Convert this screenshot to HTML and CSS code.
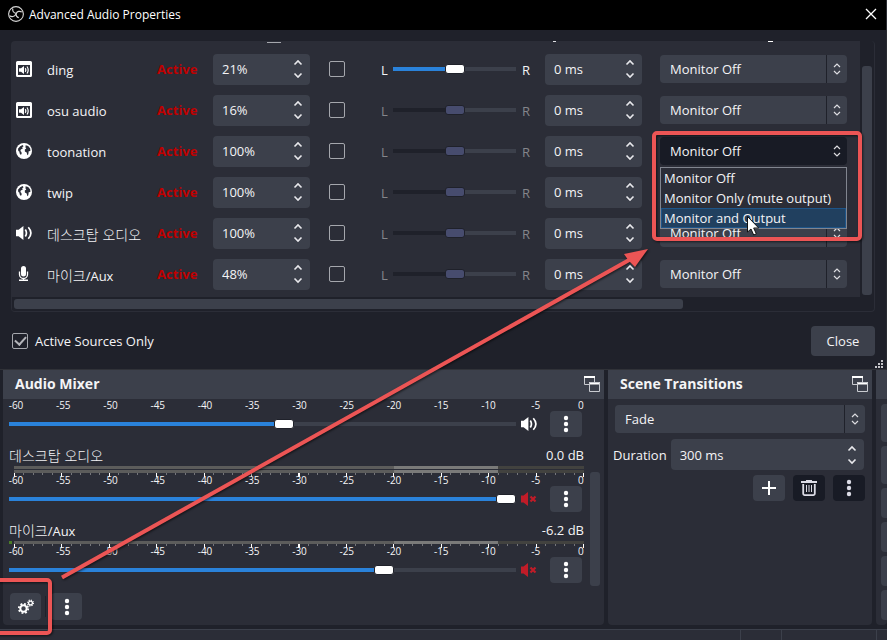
FILE: index.html
```html
<!DOCTYPE html>
<html lang="en">
<head>
<meta charset="utf-8">
<title>Advanced Audio Properties</title>
<link rel="stylesheet" href="styles.css">
</head>
<body>
<svg class="defs" aria-hidden="true">
  <symbol id="spin" viewBox="0 0 10 20"><path d="M1.500 5.500 5 2l3.500 3.500M1.500 14.500 5 18l3.500-3.500" fill="none" stroke="#e8e8ec" stroke-width="1.600"/></symbol>
  <symbol id="updown" viewBox="0 0 8 12"><path d="M1 4l3-3 3 3M1 8l3 3 3-3" fill="none" stroke="#dcdce0" stroke-width="1.200"/></symbol>
  <symbol id="app" viewBox="0 0 16 16"><path fill="#fff" fill-rule="evenodd" d="M1.500 0h13A1.500 1.500 0 0 1 16 1.500v13a1.500 1.500 0 0 1-1.500 1.500h-13A1.500 1.500 0 0 1 0 14.500v-13A1.500 1.500 0 0 1 1.500 0zM2 4v10h12V4z"/><path fill="#fff" d="M3 7.300h2L8 5v8L5 10.700H3z"/><path fill="none" stroke="#fff" stroke-width="1.200" d="M9.300 7.200q1.200 1.800 0 3.600M11 5.500q2.400 3.500 0 7"/></symbol>
  <symbol id="globe" viewBox="0 0 16 16"><circle cx="8" cy="8" r="8" fill="#fff"/><path fill="#2b2d37" d="M4.200 3.200 6.600 2l1 1.300-1.400 1 .6 1.200-2 1-.4 1.600 1 .8.300 1.700-.8 1.400-1.200-1.500-.4-2L2.300 8 2 5.800zM9.600 2.300l2.600.7 2 2.600.2 2.400-1.700.2-.4 3-1 1-.6-2.700-1.800-1-.1-1.900 1.500-1-.8-1z"/></symbol>
  <symbol id="speaker" viewBox="0 0 16 16"><path fill="#fff" d="M0 4.700h2.600L7.400 1v14l-4.800-3.700H0z"/><path fill="none" stroke="#fff" stroke-width="1.700" d="M9.300 4.600q2.300 3.400 0 6.800M12.300 2.300q5.200 5.700 0 11.400"/></symbol>
  <symbol id="muted" viewBox="0 0 16 16"><path fill="#c01c28" d="M0 4.500h2.500L7 1v14l-4.500-3.500H0z"/><path stroke="#c01c28" stroke-width="2.200" d="M9.500 5.500l5 5M14.500 5.500l-5 5"/></symbol>
  <symbol id="mic" viewBox="0 0 16 16"><rect x="5" y="0" width="5" height="10.500" rx="2.500" fill="#fff"/><path fill="none" stroke="#fff" stroke-width="1.300" d="M3.500 5.500v3a4 4 0 0 0 8 0v-3M7.500 12.500v2"/><path fill="#fff" d="M3 13.600h9V15H3z"/></symbol>
  <symbol id="dots" viewBox="0 0 6 18"><g fill="currentColor"><circle cx="3" cy="3" r="2.200"/><circle cx="3" cy="9" r="2.200"/><circle cx="3" cy="15" r="2.200"/></g></symbol>
  <symbol id="popout" viewBox="0 0 16 16"><path fill="none" stroke="#c9cbd0" d="M5 8.500H.5v-8h10V6"/><path fill="#fff" d="M0 0h11v2H0zM5 6h11v2.500H5z"/><path fill="none" stroke="#c9cbd0" d="M5.500 6.500h10v9h-10z"/></symbol>
</svg>

<div class="app">
<section class="dialog">
  <header class="titlebar">
    <svg width="16" height="16" viewBox="0 0 16 16" aria-hidden="true"><g fill="none" stroke="#d6d6d6"><circle cx="8" cy="8" r="7.400" stroke-width="1.100"/><path stroke-width="1.200" d="M4.800 2.500c-.6 2.400.8 4.600 3.600 4.800M13.800 6c-2-1.300-4.700-.6-5.400 1.300-.8 2 .4 4 2.400 4.300M1.500 9.800c2.300 1.300 5 .9 6-1 .4-.7.600-1.200.900-1.500"/></g></svg>
    <h1>Advanced Audio Properties</h1>
    <button class="x" aria-label="Close window"><svg width="12" height="12" viewBox="0 0 12 12"><path d="M1 1l10 10M11 1 1 11" stroke="#fff" stroke-width="1.300"/></svg></button>
  </header>

  <div class="frame">
    <div class="sources">
      <div class="heading" aria-hidden="true"><i class="h-box"></i><i class="h-sync"></i><i class="h-mon"></i></div>

      <div class="row">
        <svg class="ico"><use href="#app"/></svg><span class="name">ding</span><b class="active">Active</b>
        <div class="spin"><input type="text" value="21%" aria-label="ding volume"><svg><use href="#spin"/></svg></div>
        <input class="check" type="checkbox" aria-label="ding mono">
        <div class="balance"><span>L</span><input type="range" value="50" style="--v:50%" aria-label="ding balance"><span>R</span></div>
        <div class="spin"><input type="text" value="0 ms" aria-label="ding sync offset"><svg><use href="#spin"/></svg></div>
        <div class="select"><select aria-label="ding monitoring"><option>Monitor Off</option></select><svg><use href="#updown"/></svg></div>
      </div>

      <div class="row">
        <svg class="ico"><use href="#app"/></svg><span class="name">osu audio</span><b class="active">Active</b>
        <div class="spin"><input type="text" value="16%" aria-label="osu audio volume"><svg><use href="#spin"/></svg></div>
        <input class="check" type="checkbox" aria-label="osu audio mono">
        <div class="balance off"><span>L</span><input type="range" value="50" style="--v:50%" disabled aria-label="osu audio balance"><span>R</span></div>
        <div class="spin"><input type="text" value="0 ms" aria-label="osu audio sync offset"><svg><use href="#spin"/></svg></div>
        <div class="select"><select aria-label="osu audio monitoring"><option>Monitor Off</option></select><svg><use href="#updown"/></svg></div>
      </div>

      <div class="row">
        <svg class="ico"><use href="#globe"/></svg><span class="name">toonation</span><b class="active">Active</b>
        <div class="spin"><input type="text" value="100%" aria-label="toonation volume"><svg><use href="#spin"/></svg></div>
        <input class="check" type="checkbox" aria-label="toonation mono">
        <div class="balance off"><span>L</span><input type="range" value="50" style="--v:50%" disabled aria-label="toonation balance"><span>R</span></div>
        <div class="spin"><input type="text" value="0 ms" aria-label="toonation sync offset"><svg><use href="#spin"/></svg></div>
        <div class="select open"><select aria-label="toonation monitoring"><option>Monitor Off</option></select><svg><use href="#updown"/></svg>
          <ul class="menu" role="listbox" aria-label="Monitoring options">
            <li role="option">Monitor Off</li>
            <li role="option">Monitor Only (mute output)</li>
            <li role="option" class="hover">Monitor and Output</li>
          </ul>
        </div>
      </div>

      <div class="row">
        <svg class="ico"><use href="#globe"/></svg><span class="name">twip</span><b class="active">Active</b>
        <div class="spin"><input type="text" value="100%" aria-label="twip volume"><svg><use href="#spin"/></svg></div>
        <input class="check" type="checkbox" aria-label="twip mono">
        <div class="balance off"><span>L</span><input type="range" value="50" style="--v:50%" disabled aria-label="twip balance"><span>R</span></div>
        <div class="spin"><input type="text" value="0 ms" aria-label="twip sync offset"><svg><use href="#spin"/></svg></div>
        <div></div>
      </div>

      <div class="row">
        <svg class="ico"><use href="#speaker"/></svg><span class="name" lang="ko"><span class="ko">데스크탑 오디오</span></span><b class="active">Active</b>
        <div class="spin"><input type="text" value="100%" aria-label="데스크탑 오디오 volume"><svg><use href="#spin"/></svg></div>
        <input class="check" type="checkbox" aria-label="데스크탑 오디오 mono">
        <div class="balance off"><span>L</span><input type="range" value="50" style="--v:50%" disabled aria-label="데스크탑 오디오 balance"><span>R</span></div>
        <div class="spin"><input type="text" value="0 ms" aria-label="데스크탑 오디오 sync offset"><svg><use href="#spin"/></svg></div>
        <div class="select"><select aria-label="데스크탑 오디오 monitoring"><option>Monitor Off</option></select><svg><use href="#updown"/></svg></div>
      </div>

      <div class="row">
        <svg class="ico"><use href="#mic"/></svg><span class="name" lang="ko"><span class="ko">마이크</span>/Aux</span><b class="active">Active</b>
        <div class="spin"><input type="text" value="48%" aria-label="마이크/Aux volume"><svg><use href="#spin"/></svg></div>
        <input class="check" type="checkbox" aria-label="마이크/Aux mono">
        <div class="balance off"><span>L</span><input type="range" value="50" style="--v:50%" disabled aria-label="마이크/Aux balance"><span>R</span></div>
        <div class="spin"><input type="text" value="0 ms" aria-label="마이크/Aux sync offset"><svg><use href="#spin"/></svg></div>
        <div class="select"><select aria-label="마이크/Aux monitoring"><option>Monitor Off</option></select><svg><use href="#updown"/></svg></div>
      </div>
    </div>
    <div class="vbar"><i></i></div>
    <div class="hbar"><i></i></div>
  </div>

  <footer class="actions">
    <input class="check" type="checkbox" id="only" checked><label for="only">Active Sources Only</label>
    <button class="close">Close</button>
    <svg class="grip" width="8" height="8" viewBox="0 0 8 8" aria-hidden="true"><path fill="#c4c4c8" d="M6 0h2v2H6zM3 3h2v2H3zM6 3h2v2H6zM0 6h2v2H0zM3 6h2v2H3zM6 6h2v2H6z"/></svg>
  </footer>
</section>

<main class="docks">
  <section class="dock mixer">
    <header><h2>Audio Mixer</h2><svg><use href="#popout"/></svg></header>
    <div class="mixer-body">
      <div class="strips">
        <div class="strip">
          <div class="scale"><span>-60</span><span>-55</span><span>-50</span><span>-45</span><span>-40</span><span>-35</span><span>-30</span><span>-25</span><span>-20</span><span>-15</span><span>-10</span><span>-5</span><span>0</span></div>
          <div class="fader"><input type="range" step="any" value="54.5" style="--v:54.5%" aria-label="Volume"><button class="mute" aria-label="Mute"><svg><use href="#speaker"/></svg></button><button class="tool" aria-label="Options"><svg><use href="#dots"/></svg></button></div>
        </div>
        <div class="strip">
          <div class="caption"><span class="ko" lang="ko">데스크탑 오디오</span><span>0.0 dB</span></div>
          <div class="meter"></div><div class="meter"></div><div class="ticks"></div>
          <div class="scale"><span>-60</span><span>-55</span><span>-50</span><span>-45</span><span>-40</span><span>-35</span><span>-30</span><span>-25</span><span>-20</span><span>-15</span><span>-10</span><span>-5</span><span>0</span></div>
          <div class="fader"><input type="range" value="100" style="--v:100%" aria-label="데스크탑 오디오 volume"><button class="mute" aria-label="Unmute"><svg><use href="#muted"/></svg></button><button class="tool" aria-label="Options"><svg><use href="#dots"/></svg></button></div>
        </div>
        <div class="strip">
          <div class="caption"><span lang="ko"><span class="ko">마이크</span>/Aux</span><span>-6.2 dB</span></div>
          <div class="meter live"></div><div class="ticks"></div>
          <div class="scale"><span>-60</span><span>-55</span><span>-50</span><span>-45</span><span>-40</span><span>-35</span><span>-30</span><span>-25</span><span>-20</span><span>-15</span><span>-10</span><span>-5</span><span>0</span></div>
          <div class="fader"><input type="range" value="75" style="--v:75%" aria-label="마이크/Aux volume"><button class="mute" aria-label="Unmute"><svg><use href="#muted"/></svg></button><button class="tool" aria-label="Options"><svg><use href="#dots"/></svg></button></div>
        </div>
      </div>
      <i class="thumb"></i>
    </div>
    <div class="toolbar">
      <button class="tool" aria-label="Advanced audio properties"><svg class="gears" viewBox="0 0 16 16"><g fill="none" stroke="#fff"><circle cx="5.500" cy="9.500" r="3.200" stroke-width="2"/><circle cx="5.500" cy="9.500" r="4.700" stroke-width="1.800" stroke-dasharray="1.850 1.840"/><circle cx="12.500" cy="4" r="1.900" stroke-width="1.300"/><circle cx="12.500" cy="4" r="2.900" stroke-width="1.200" stroke-dasharray="1.140 1.140"/></g></svg></button>
      <i></i>
      <button class="tool" aria-label="Mixer menu"><svg><use href="#dots"/></svg></button>
    </div>
  </section>

  <section class="dock transitions">
    <header><h2>Scene Transitions</h2><svg><use href="#popout"/></svg></header>
    <div class="form">
      <div class="select"><select aria-label="Transition"><option>Fade</option></select><svg><use href="#updown"/></svg></div>
      <div class="duration"><label for="dur">Duration</label><div class="spin"><input id="dur" type="text" value="300 ms"><svg><use href="#spin"/></svg></div></div>
      <div class="buttons">
        <button class="tool" aria-label="Add"><svg class="plus" viewBox="0 0 14 14"><path stroke="#fff" stroke-width="2" d="M7 0v14M0 7h14"/></svg></button>
        <button class="tool dim" aria-label="Remove"><svg class="bin" viewBox="0 0 16 16"><path fill="#dcdce6" d="M5 0h6v1h5v2H0V1h5z"/><path fill="none" stroke="#dcdce6" stroke-width="1.800" d="M2.200 4v9.600a1.500 1.500 0 0 0 1.500 1.500h8.600a1.500 1.500 0 0 0 1.500-1.500V4"/><path stroke="#dcdce6" d="M5.500 5v7M8 5v7M10.500 5v7"/></svg></button>
        <button class="tool dim" aria-label="Options"><svg><use href="#dots"/></svg></button>
      </div>
    </div>
  </section>

  <section class="dock controls">
    <header></header>
    <div class="stack"><i></i><i></i><i></i><i></i><i></i><i></i></div>
  </section>
</main>
<footer class="status"><i></i><i></i><i></i></footer>

<svg class="marks" width="887" height="640" viewBox="0 0 887 640" aria-hidden="true">
  <path fill="#fff" stroke="#111" d="M747.500 216.500v15.500l3.500-3 2.700 6 2.600-1.200-2.600-5.800h5z"/>
  <g class="shade">
    <rect x="654" y="133" width="206" height="106" rx="3" fill="none" stroke="#ec5555" stroke-width="4"/>
    <rect x="-10" y="580" width="60" height="53" rx="3" fill="none" stroke="#ec5555" stroke-width="4"/>
    <path stroke="#ec5555" stroke-width="4" d="M62 577.500 630 259.500"/>
    <path fill="#ec5555" d="M648 249l-24 5 4.500 6.500L635 267z"/>
  </g>
</svg>
</div>
</body>
</html>
```
FILE: styles.css
```css
* { box-sizing: border-box; }
body {
  margin: 0;
  background: #1f212a;
  color: #f4f4f6;
  font: 13px/20px "Open Sans", "Noto Sans CJK KR", sans-serif;
}
h1, h2, ul { margin: 0; padding: 0; list-style: none; }
button, input, select { font: inherit; color: inherit; margin: 0; padding: 0; border: 0; background: none; }
.defs { display: block; width: 0; height: 0; position: absolute; }
.app { position: relative; display: flex; flex-direction: column; min-height: 100vh; overflow: hidden; }
.ko { font-family: "Noto Sans CJK KR", sans-serif; font-size: 14px; font-weight: 300; }

/* dialog */
.dialog { border-right: 1px solid #292b31; border-bottom: 1px solid #303238; }
.titlebar { display: flex; align-items: center; gap: 5px; height: 30px; padding: 0 9px 2px 8px; background: #000; }
.titlebar h1 { flex: 1; padding-top: 2px; font-size: 12px; font-weight: 400; color: #fff; }
.x { display: flex; }

.frame {
  display: grid;
  grid-template-columns: 1fr 14px;
  margin: 11px 11px 0;
  border: 1px solid #2b2d37;
  border-width: 0 1px 1px 0;
  border-radius: 4px;
  overflow: hidden;
}
.sources { background: #2b2d37; padding-bottom: 2px; }
.vbar { padding: 25px 2px 2px; display: flex; }
.vbar i, .hbar i, .thumb { background: #3c404b; border-radius: 3px; }
.vbar i { flex: 1; }
.hbar { grid-column: 1 / 3; height: 14px; padding: 2px; border-left: 1px solid #2b2d37; display: flex; }
.hbar i { width: 78%; }

.row, .heading {
  display: grid;
  grid-template-columns: 16px 110px 71px 97px 56px 179px 97px 205px;
  align-items: center;
  padding: 0 0 0 5px;
}
.row { height: 41px; padding-bottom: 1px; }
.name { padding: 2px 0 0 15px; white-space: nowrap; }
.heading { height: 8px; align-items: start; }
.h-box { grid-column: 4; width: 14px; height: 1px; margin: 1px 0 0 54px; background: #a5a7ad; }
.h-sync { grid-column: 7; width: 3px; height: 1px; margin-left: 8px; background: #dfe0e4; }
.h-mon { grid-column: 8; width: 5px; height: 1px; margin-left: 126px; background: #fff; }
.ico { width: 16px; height: 16px; }
.active { padding-left: 15px; color: #c00000; }
.row .check { margin-left: 19px; }

.spin, .select { display: grid; align-items: center; position: relative; }
.spin { height: 31px; background: #3c404b; border-radius: 4px; }
.spin > *, .select > select, .select > svg { grid-area: 1 / 1; }
.spin input { width: 100%; height: 31px; padding: 0 24px 0 9px; }
.spin > svg { width: 10px; height: 20px; justify-self: end; margin-right: 7px; pointer-events: none; }
.select { height: 28px; border-radius: 4px; background: linear-gradient(90deg, #3c404b calc(100% - 21px), #1f212a 0 calc(100% - 20px), #3c404b 0); }
.select select { appearance: none; width: 100%; height: 28px; padding-left: 10px; }
.select > svg { width: 8px; height: 12px; justify-self: end; margin-right: 6px; pointer-events: none; }
.select.open { background: #181b25; }
.row .select { margin-left: 18px; }

.menu {
  position: absolute;
  z-index: 2;
  top: 30px;
  left: 0;
  right: 0;
  border: 1px solid #81858f;
  background: #2b2d37;
}
.menu li { height: 20px; padding-left: 3px; white-space: nowrap; }
.menu .hover { background: #21405f; box-shadow: inset 0 0 0 1px #1d5488; }

.check {
  appearance: none;
  width: 16px;
  height: 16px;
  border: 1px solid #a5a7ad;
  border-radius: 2px;
  display: grid;
  place-items: center;
}
.check:checked::after { content: ""; width: 5px; height: 9px; margin-bottom: 3px; border: solid #b4b5ba; border-width: 0 2px 2px 0; rotate: 42deg; }

.balance { display: grid; grid-template-columns: 12px 123px 14px; align-items: center; margin-left: 15px; }
.balance span { padding-top: 2px; }
.balance span:last-child { padding-left: 6px; }
.balance.off { color: #85868b; }

input[type="range"] {
  --fill: #2a82da;
  --knob: #fff;
  appearance: none;
  width: 100%;
  height: 10px;
  background: linear-gradient(90deg, var(--fill) var(--v), #3c404b 0) center / 100% 4px no-repeat;
  border-radius: 2px;
}
input[type="range"]:disabled { --fill: #1f212a; --knob: #474c6e; }
input[type="range"]::-webkit-slider-thumb {
  appearance: none;
  width: 20px;
  height: 10px;
  border: 1px solid #1f212a;
  border-radius: 3px;
  background: var(--knob);
}

.actions { position: relative; display: flex; align-items: center; gap: 7px; height: 57px; padding: 0 11px 0 12px; }
.actions label { flex: 1; }
.close { width: 64px; height: 30px; border-radius: 4px; background: #3c404b; }
.grip { position: absolute; right: 3px; bottom: 1px; }

/* docks */
.docks { flex: 1; display: grid; grid-template-columns: 601fr 264px 11px; gap: 4px; padding-left: 3px; }
.dock { background: #2b2d37; border-radius: 0 0 4px 4px; min-width: 0; }
.dock > header { display: flex; align-items: center; justify-content: space-between; height: 29px; padding: 0 4px 2px 12px; background: #3c404b; }
.dock h2 { font-size: 14px; font-weight: 700; }
.dock > header svg { width: 16px; height: 16px; }

.mixer-body { display: grid; grid-template-columns: 1fr 10px; padding: 0 4px 0 6px; height: 188px; }
.thumb { height: 114px; align-self: end; margin-bottom: 1px; }
.strip + .strip { padding-top: 8px; }
.caption { display: flex; justify-content: space-between; height: 21px; padding-right: 6px; }
.meter {
  height: 3px;
  margin: 0 6px 0 5px;
  background: linear-gradient(90deg, #5c5c5b 66.7%, #7a7a79 0 85%, #42423f 0);
}
.meter + .meter { margin-top: 1px; }
.meter.live { margin-left: 0; background: linear-gradient(90deg, #4b7d28 3px, #2b2d37 0 5px, #5c5c5b 0 67%, #7a7a79 0 85%, #42423f 0); }
.ticks {
  height: 4px;
  margin: 0 6px -3px 5px;
  border-right: 1px solid #fff;
  background:
    repeating-linear-gradient(90deg, #fff 0 1px, transparent 1px calc(100% / 12)),
    repeating-linear-gradient(90deg, #75767b 0 1px, transparent 1px calc(100% / 60)) top / 100% 2px no-repeat;
}
.scale { display: flex; justify-content: space-between; font-size: 10px; line-height: 12px; }
.scale span { width: 14px; display: flex; justify-content: center; }
.scale span:last-child { justify-content: flex-start; padding-left: 2px; }
.fader { display: grid; grid-template-columns: 1fr 29px 32px; align-items: center; padding-right: 8px; height: 26px; }
.fader input { width: calc(100% - 5px); }
.mute { display: flex; }
.mute svg { width: 16px; height: 16px; }

.tool { display: flex; align-items: center; justify-content: center; width: 32px; height: 26px; border-radius: 4px; background: #3c404b; color: #fff; }
.tool.dim { background: #181b25; color: #dcdce6; }
.tool svg { width: 6px; height: 18px; }
.tool .gears { width: 16px; height: 16px; }
.tool .plus { width: 14px; height: 14px; }
.tool .bin { width: 16px; height: 16px; }

.toolbar { display: flex; align-items: center; gap: 4px; padding: 6px 7px 5px; }
.toolbar .tool { width: 31px; height: 27px; }
.toolbar i { width: 1px; height: 21px; margin-right: 1px; background: #1f212a; }

.form { display: grid; gap: 5px; padding: 6px 7px 0 5px; }
.form > .select { margin-left: 2px; }
.duration { display: grid; grid-template-columns: auto 1fr; gap: 4px; align-items: center; padding: 1px 1px 0 0; }
.buttons { display: flex; justify-content: flex-end; gap: 8px; }
.stack { display: grid; gap: 4px; padding: 5px 0 0 5px; }
.stack i { height: 30px; border-radius: 4px 0 0 4px; background: #3c404b; }
.stack i:nth-child(-n+2) { height: 38px; }

.status { display: grid; grid-template-columns: 1fr 41px 95px 10px; height: 11px; margin-top: 4px; border-top: 1px solid #3c404b; background: #2b2d37; }
.status i { border-right: 1px solid #3c404b; }

/* callouts drawn over the windows */
.marks { position: absolute; inset: 0 auto auto 0; pointer-events: none; z-index: 5; }
.shade { filter: drop-shadow(1px 1px 1px #0009); }
```
